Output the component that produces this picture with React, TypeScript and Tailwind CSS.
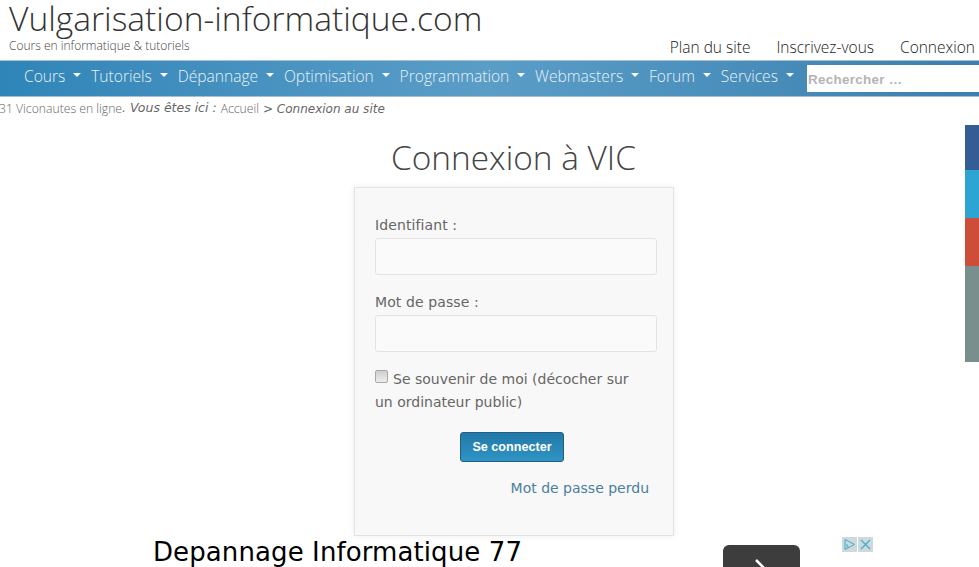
const NAV_ITEMS = ['Cours', 'Tutoriels', 'Dépannage', 'Optimisation', 'Programmation', 'Webmasters', 'Forum', 'Services']

const LIGHT = { fontFamily: '"Open Sans", sans-serif' }
const BODY = { fontFamily: '"DejaVu Sans", sans-serif' }
const ARIAL = { fontFamily: '"Liberation Sans", sans-serif' }

function Caret() {
  return <span className="ml-[8px] mb-[3px] inline-block border-x-[4px] border-t-[4px] border-x-transparent border-t-white" />
}

function Header() {
  return (
    <header className="flex h-[60px] justify-between" style={LIGHT}>
      <div className="pl-[9px]">
        <div className="h-[39px] whitespace-nowrap text-[33.6px] leading-[36px] font-light text-[#333]">Vulgarisation-informatique.com</div>
        <div className="text-[12px] leading-[14px] font-light text-[#444]">Cours en informatique &amp; tutoriels</div>
      </div>
      <div className="flex items-end gap-[26px] pr-[4px] pb-[3px] text-[15.5px] font-light leading-[20px] text-[#222]">
        <span>Plan du site</span>
        <span>Inscrivez-vous</span>
        <span>Connexion</span>
      </div>
    </header>
  )
}

function Nav() {
  return (
    <nav className="flex h-[37px] justify-between border-y border-[#a9c0d2] bg-gradient-to-r from-[#2f85b8] via-[#5a9dc7] to-[#3a7fb0]">
      <ul className="-mt-[3px] flex items-center gap-[9.8px] pl-[24px] text-[15.6px] font-light text-[#e8f2f8]" style={LIGHT}>
        {NAV_ITEMS.map((item) => (
          <li key={item} className="flex items-center whitespace-nowrap">
            {item}
            <Caret />
          </li>
        ))}
      </ul>
      <div className="mt-[4px] h-[27px] w-[172px] bg-white pl-[1px] text-[13.4px] font-bold leading-[29px] tracking-[0.3px] text-[#b4b4b4]" style={ARIAL}>
        Rechercher …
      </div>
    </nav>
  )
}

function Breadcrumb() {
  return (
    <div className="flex h-[23px] items-center whitespace-nowrap pl-0 text-[12px] text-[#666]" style={BODY}>
      <span className="-ml-[1px] mt-[1px] text-[12.2px] font-light text-[#666]" style={LIGHT}>31 Viconautes en ligne</span>
      <span className="italic text-[12.5px]">. Vous êtes ici :</span>
      <span className="ml-[4px] mt-[1px] text-[12.2px] font-light text-[#666]" style={LIGHT}>Accueil</span>
      <span className="ml-[4px] italic">&gt; Connexion au site</span>
    </div>
  )
}

function Field({ label, className }: { label: string; className: string }) {
  return (
    <div className={className}>
      <label className="block text-[14px] leading-[20px] tracking-[0.1px] text-[#666]">{label}</label>
      <div className="mt-[3px] h-[37px] w-[282px] rounded-[3px] border border-[#e3e3e3] bg-[#fafafa]" />
    </div>
  )
}

function LoginCard() {
  return (
    <div className="ml-[354px] mt-[8px] h-[349px] w-[320px] border border-[#e3e3e3] bg-[#f8f8f8] pl-[20px] pt-[27px] shadow-[0_0_6px_rgba(0,0,0,0.08)]" style={BODY}>
      <Field label="Identifiant :" className="" />
      <Field label="Mot de passe :" className="mt-[17px]" />
      <p className="mt-[16px] w-[270px] text-[14px] leading-[23px] text-[#666]">
        <input type="checkbox" className="mr-[5px] inline-block h-[13px] w-[13px] appearance-none rounded-[2px] border border-[#a8a8a8] bg-gradient-to-b from-[#d0d0d0] to-[#ececec] align-[1px]" />
        Se souvenir de moi (décocher sur un ordinateur public)
      </p>
      <div className="mt-[18px] pl-[85px]">
        <button className="h-[30px] w-[104px] rounded-[3px] border border-[#1d5f86] bg-gradient-to-b from-[#2279a8] to-[#2f94c4] text-[12.6px] font-bold text-white" style={ARIAL}>
          Se connecter
        </button>
      </div>
      <div className="mt-[16px] w-[274px] text-right text-[14px] leading-[20px] text-[#4a7f9f]">Mot de passe perdu</div>
    </div>
  )
}

function AdRow() {
  return (
    <div className="relative flex h-[32px] pl-[153px]">
      <div className="pt-[1px] text-[26px] leading-[30px] tracking-[0.1px] text-black" style={BODY}>Depannage Informatique 77</div>
      <div className="absolute left-[723px] top-[9px] h-[30px] w-[77px] rounded-t-[6px] bg-[#3d3d3d]">
        <svg width="77" height="22" viewBox="0 0 77 22" className="absolute left-0 top-0">
          <path d="M33 15 L41 23" stroke="#fff" strokeWidth="2.5" fill="none" />
        </svg>
      </div>
      <div className="absolute left-[842px] top-[1px] flex gap-[1px]">
        <span className="flex h-[15px] w-[15px] items-center justify-center bg-[#cfd8dc]">
          <svg width="13" height="13" viewBox="0 0 13 13" fill="none" stroke="#3bb0c9" strokeWidth="1">
            <path d="M2 1.5 L11.5 6.5 L2 11.5 Z" />
            <path d="M4 6 V9 H6" />
          </svg>
        </span>
        <span className="flex h-[15px] w-[15px] items-center justify-center bg-[#cfd8dc]">
          <svg width="13" height="13" viewBox="0 0 13 13" fill="none" stroke="#3bb0c9" strokeWidth="1.2">
            <path d="M2 2 L11 11 M11 2 L2 11" />
          </svg>
        </span>
      </div>
    </div>
  )
}

function SocialBar() {
  return (
    <div className="absolute right-0 top-[125px] flex w-[14px] flex-col">
      <div className="h-[45px] bg-[#345d96]" />
      <div className="h-[48px] bg-[#2ca5d2]" />
      <div className="h-[48px] bg-[#cd4d38]" />
      <div className="h-[96px] bg-[#788f8e]" />
    </div>
  )
}

export default function App() {
  return (
    <div className="relative h-[567px] w-[979px] overflow-hidden bg-white">
      <Header />
      <Nav />
      <Breadcrumb />
      <h1 className="mt-[15px] h-[44px] pl-[48px] text-center text-[33.4px] font-light leading-[45px] text-[#444]" style={LIGHT}>Connexion à VIC</h1>
      <LoginCard />
      <AdRow />
      <SocialBar />
    </div>
  )
}
